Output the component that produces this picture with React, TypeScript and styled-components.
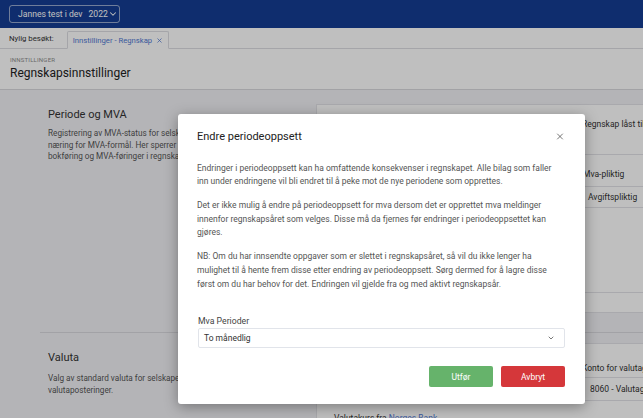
import React from "react";
import styled, { createGlobalStyle } from "styled-components";
import { ChevronDown, X } from "lucide-react";

const GlobalStyle = createGlobalStyle`
  html, body {
    margin: 0;
    padding: 0;
  }
  body {
    font-family: Roboto, "Noto Sans", Arial, sans-serif;
    background: #f1f1f5;
  }
  * {
    box-sizing: border-box;
  }
`;

const Page = styled.div`
  position: relative;
  width: 100%;
  height: 418px;
  overflow: hidden;
  display: flex;
  flex-direction: column;
`;

const TopBar = styled.div`
  height: 28px;
  background: #143d93;
  display: flex;
  align-items: center;
  padding: 0 9px;
  flex-shrink: 0;
`;

const CompanyButton = styled.div`
  width: 111px;
  height: 18px;
  border: 1px solid rgba(255, 255, 255, 0.55);
  border-radius: 3px;
  color: #fff;
  font-size: 8.6px;
  white-space: nowrap;
  display: flex;
  align-items: center;
  padding: 0 8px 0 8px;

  span + span {
    margin-left: 6px;
  }

  svg {
    margin-left: auto;
    flex-shrink: 0;
  }
`;

const TabBar = styled.div`
  height: 21px;
  background: #fff;
  border-bottom: 1px solid #dcdde2;
  display: flex;
  align-items: flex-end;
  padding-left: 9px;
  flex-shrink: 0;
`;

const RecentLabel = styled.span`
  align-self: center;
  font-size: 7.8px;
  color: #333;
  margin-right: 13px;
`;

const Tab = styled.div`
  height: 18px;
  margin-bottom: -1px;
  border: 1px solid #dcdde2;
  border-bottom-color: #fff;
  border-radius: 2px 2px 0 0;
  background: #fff;
  padding: 0 5px;
  color: #4f78d2;
  font-size: 7.7px;
  display: flex;
  align-items: center;
  gap: 4px;
`;

const PageHeader = styled.div`
  height: 41px;
  background: #fff;
  border-bottom: 1px solid #d8d8dd;
  padding: 7px 10px 0;
  flex-shrink: 0;
`;

const Crumb = styled.div`
  font-size: 6px;
  line-height: 8px;
  letter-spacing: 0.2px;
  color: #8c8c8c;
`;

const PageTitle = styled.div`
  margin-top: 1px;
  font-size: 12px;
  line-height: 16px;
  color: #222;
`;

const Main = styled.div`
  flex: 1;
  padding-left: 40px;
`;

const Section = styled.div<{ $height?: number; $divider?: boolean }>`
  display: grid;
  grid-template-columns: 276px 1fr;
  height: ${(p) => (p.$height ? `${p.$height}px` : "auto")};
  border-bottom: ${(p) => (p.$divider ? "1px solid #d9d9de" : "none")};
`;

const SectionInfo = styled.div`
  padding: 18px 0 0 8px;
  overflow: hidden;
`;

const SectionTitle = styled.div`
  font-size: 11px;
  line-height: 14px;
  color: #333;
`;

const SectionText = styled.div<{ $gap: number }>`
  margin-top: ${(p) => p.$gap}px;
  font-size: 8.2px;
  line-height: 11.5px;
  color: #555;
  white-space: nowrap;
`;

const SectionBody = styled.div<{ $top: number }>`
  padding-top: ${(p) => p.$top}px;
  overflow: hidden;
`;

const Card = styled.div<{ $height?: number }>`
  height: ${(p) => (p.$height ? `${p.$height}px` : "auto")};
  background: #fff;
  border: 1px solid #e2e2e7;
  border-right: none;
`;

const CardRow = styled.div<{ $height: number; $top: number; $line?: boolean; $indent: number }>`
  height: ${(p) => p.$height}px;
  padding-top: ${(p) => p.$top}px;
  padding-left: ${(p) => p.$indent}px;
  border-bottom: ${(p) => (p.$line ? "1px solid #e2e2e7" : "none")};
  font-size: 8.5px;
  line-height: 10px;
  color: #333;
  white-space: nowrap;
`;

const LinkText = styled.span`
  color: #4f78d2;
`;

const Overlay = styled.div`
  position: absolute;
  inset: 0;
  background: rgba(0, 0, 0, 0.25);
`;

const Modal = styled.div`
  position: absolute;
  left: 178px;
  top: 114px;
  width: 407px;
  height: 290px;
  background: #fff;
  border-radius: 3px;
  box-shadow: 0 3px 14px rgba(0, 0, 0, 0.35);
  padding: 16px 20px 17px 20px;
  display: flex;
  flex-direction: column;
`;

const ModalHeader = styled.div`
  display: flex;
  align-items: center;
  justify-content: space-between;
  height: 14px;
`;

const ModalTitle = styled.div`
  font-size: 11px;
  color: #222;
  margin-left: -1px;
`;

const CloseButton = styled.div`
  width: 10px;
  height: 10px;
  display: flex;
  align-items: center;
  justify-content: center;
  color: #333;
`;

const ModalBody = styled.div`
  margin-top: 18px;
  font-size: 8.5px;
  line-height: 13.6px;
  color: #555;
  margin-left: -1px;
  white-space: nowrap;

  p {
    margin: 0 0 10.4px;
  }
`;

const FieldLabel = styled.div`
  margin-top: 14px;
  font-size: 8.7px;
  line-height: 10px;
  color: #444;
`;

const Select = styled.div`
  margin-top: 2px;
  height: 21px;
  border: 1px solid #e1e4ea;
  border-radius: 2px;
  padding: 0 9px 0 5px;
  display: flex;
  align-items: center;
  justify-content: space-between;
  font-size: 8.5px;
  color: #333;
`;

const Footer = styled.div`
  margin-top: 18px;
  display: flex;
  justify-content: flex-end;
  gap: 8px;
`;

const Button = styled.button<{ $tone: "ok" | "cancel" }>`
  width: 64px;
  height: 21px;
  border: none;
  border-radius: 2px;
  background: ${(p) => (p.$tone === "ok" ? "#66b36b" : "#d5373a")};
  color: #fff;
  font-family: Roboto, Arial, sans-serif;
  font-size: 8.5px;
  padding: 0;
`;

export default function App() {
  return (
    <>
      <GlobalStyle />
      <Page>
        <TopBar>
          <CompanyButton>
            <span>Jannes test i dev</span>
            <span>2022</span>
            <ChevronDown size={10} strokeWidth={2.5} />
          </CompanyButton>
        </TopBar>

        <TabBar>
          <RecentLabel>Nylig besøkt:</RecentLabel>
          <Tab>
            Innstillinger - Regnskap
            <X size={7} strokeWidth={2.5} />
          </Tab>
        </TabBar>

        <PageHeader>
          <Crumb>INNSTILLINGER</Crumb>
          <PageTitle>Regnskapsinnstillinger</PageTitle>
        </PageHeader>

        <Main>
          <Section $height={243} $divider>
            <SectionInfo>
              <SectionTitle>Periode og MVA</SectionTitle>
              <SectionText $gap={6}>
                Registrering av MVA-status for selskapet, og om selskapet driver
                <br />
                næring for MVA-formål. Her sperrer du også perioder for
                <br />
                bokføring og MVA-føringer i regnskapet.
              </SectionText>
            </SectionInfo>
            <SectionBody $top={14}>
              <Card $height={209}>
                <CardRow $height={50} $top={14} $indent={265} $line>
                  Regnskap låst til
                </CardRow>
                <CardRow $height={32} $top={14} $indent={266} $line>
                  Mva-pliktig
                </CardRow>
                <CardRow $height={21} $top={5} $indent={271} $line>
                  Avgiftspliktig
                </CardRow>
                <CardRow $height={85} $top={0} $indent={0} $line />
              </Card>
            </SectionBody>
          </Section>

          <Section>
            <SectionInfo>
              <SectionTitle>Valuta</SectionTitle>
              <SectionText $gap={8}>
                Valg av standard valuta for selskapet og konto for
                <br />
                valutaposteringer.
              </SectionText>
            </SectionInfo>
            <SectionBody $top={10}>
              <Card>
                <CardRow $height={34} $top={19} $indent={265} $line>
                  Konto for valutagevinst
                </CardRow>
                <CardRow $height={23} $top={6} $indent={273} $line>
                  8060 - Valutagevinst
                </CardRow>
                <CardRow $height={30} $top={12} $indent={17}>
                  Valutakurs fra <LinkText>Norges Bank</LinkText>
                </CardRow>
              </Card>
            </SectionBody>
          </Section>
        </Main>

        <Overlay />

        <Modal>
          <ModalHeader>
            <ModalTitle>Endre periodeoppsett</ModalTitle>
            <CloseButton>
              <X size={11} strokeWidth={1.6} />
            </CloseButton>
          </ModalHeader>

          <ModalBody>
            <p>
              Endringer i periodeoppsett kan ha omfattende konsekvenser i regnskapet. Alle bilag som faller
              <br />
              inn under endringene vil bli endret til å peke mot de nye periodene som opprettes.
            </p>
            <p>
              Det er ikke mulig å endre på periodeoppsett for mva dersom det er opprettet mva meldinger
              <br />
              innenfor regnskapsåret som velges. Disse må da fjernes før endringer i periodeoppsettet kan
              <br />
              gjøres.
            </p>
            <p>
              NB: Om du har innsendte oppgaver som er slettet i regnskapsåret, så vil du ikke lenger ha
              <br />
              mulighet til å hente frem disse etter endring av periodeoppsett. Sørg dermed for å lagre disse
              <br />
              først om du har behov for det. Endringen vil gjelde fra og med aktivt regnskapsår.
            </p>
          </ModalBody>

          <FieldLabel>Mva Perioder</FieldLabel>
          <Select>
            <span>To månedlig</span>
            <ChevronDown size={8} strokeWidth={2} />
          </Select>

          <Footer>
            <Button $tone="ok">Utfør</Button>
            <Button $tone="cancel">Avbryt</Button>
          </Footer>
        </Modal>
      </Page>
    </>
  );
}
